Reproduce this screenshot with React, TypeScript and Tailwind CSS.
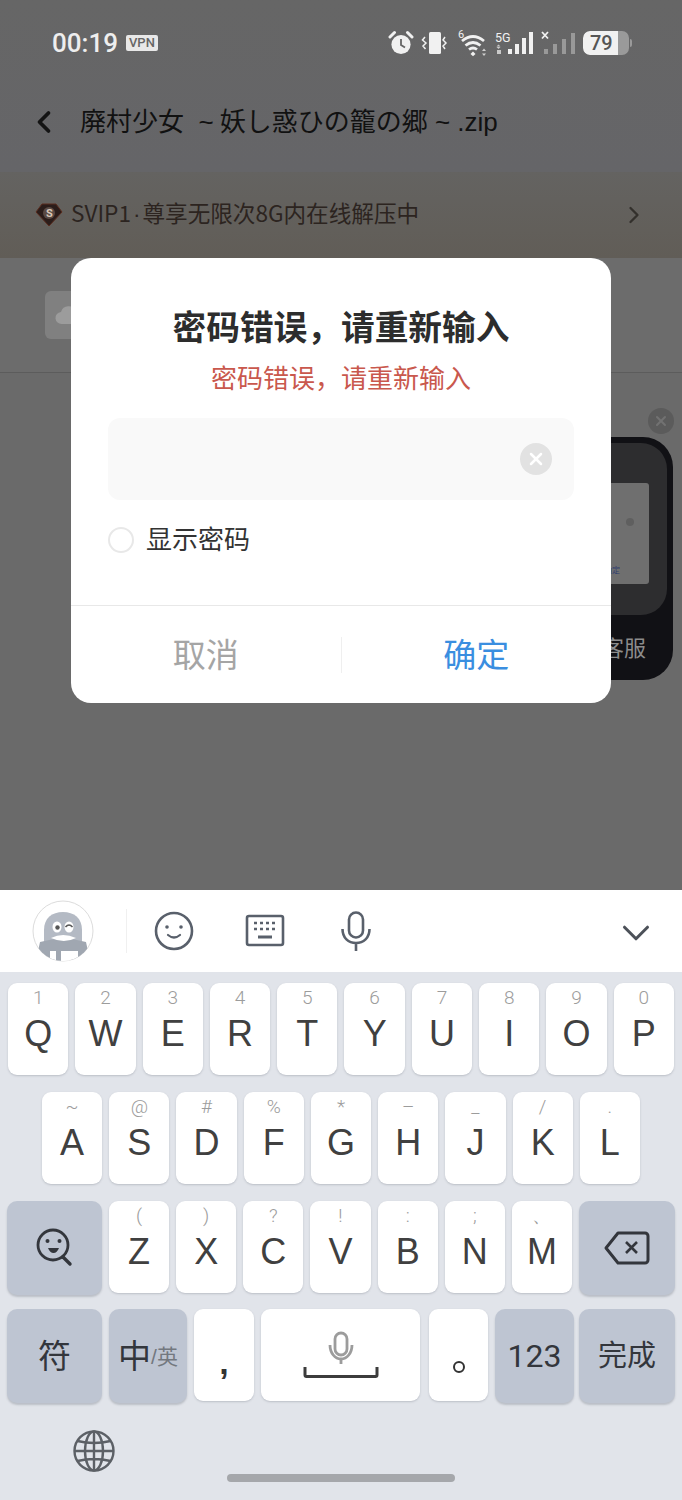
import { ChevronLeft, ChevronRight, ChevronDown, X } from "lucide-react";

const cjk = "font-['Liberation_Sans','Noto_Sans_CJK_SC',sans-serif]";

const row1 = [
  ["1", "Q"],
  ["2", "W"],
  ["3", "E"],
  ["4", "R"],
  ["5", "T"],
  ["6", "Y"],
  ["7", "U"],
  ["8", "I"],
  ["9", "O"],
  ["0", "P"],
];
const row2 = [
  ["~", "A"],
  ["@", "S"],
  ["#", "D"],
  ["%", "F"],
  ["*", "G"],
  ["–", "H"],
  ["_", "J"],
  ["/", "K"],
  [".", "L"],
];
const row3 = [
  ["(", "Z"],
  [")", "X"],
  ["?", "C"],
  ["!", "V"],
  [":", "B"],
  [";", "N"],
  ["、", "M"],
];

function LetterKey({ hint, label }: { hint: string; label: string }) {
  return (
    <div className="flex h-[92px] min-w-0 flex-1 flex-col items-center rounded-[9px] bg-white pt-[4px] shadow-[0_1px_2px_rgba(100,105,120,0.3)]">
      <span className="h-[22px] font-['Roboto',sans-serif] text-[19px] leading-[22px] font-light text-[#9c9c9c]">{hint}</span>
      <span className="mt-[3px] text-[36px] leading-[44px] text-[#404040]">{label}</span>
    </div>
  );
}

function FuncKey({ className, children }: { className: string; children: React.ReactNode }) {
  return (
    <div className={`flex h-[94px] items-center justify-center rounded-[10px] bg-[#bec5d2] shadow-[0_2px_2px_rgba(100,105,120,0.3)] ${className}`}>
      {children}
    </div>
  );
}

function PlainKey({ className, children }: { className: string; children: React.ReactNode }) {
  return (
    <div className={`flex h-[92px] items-center justify-center rounded-[9px] bg-white shadow-[0_1px_2px_rgba(100,105,120,0.3)] ${className}`}>
      {children}
    </div>
  );
}

function StatusIcons() {
  return (
    <div className="flex items-center">
      {/* alarm */}
      <svg width="26" height="26" viewBox="0 0 26 26" className="mr-[7px]">
        <circle cx="13" cy="14.5" r="9.6" fill="#f1f1f1" />
        <path d="M13 9v6l4 2.5" fill="none" stroke="#666" strokeWidth="1.8" />
        <path d="M2 7 6.5 2.5M24 7l-4.5-4.5" stroke="#f1f1f1" strokeWidth="3" strokeLinecap="round" />
      </svg>
      {/* vibrate */}
      <svg width="28" height="24" viewBox="0 0 28 24" className="mr-[9px]">
        <rect x="8" y="1" width="12" height="22" rx="1.5" fill="#f1f1f1" />
        <path d="M4 6 1.5 9 5 12l-3 3 2.5 3M24 6l-2 3 3 3-3 3 2 3" fill="none" stroke="#f1f1f1" strokeWidth="1.5" />
      </svg>
      {/* wifi */}
      <svg width="30" height="28" viewBox="0 0 30 28" className="mr-[7px]">
        <path d="M4 12q11-9 22 0M7.5 16.5q7.5-6 15 0M11 20.5q4-3 8 0" fill="none" stroke="#f1f1f1" strokeWidth="2.8" />
        <path d="M15 22.5l2.5 2.4-2.5 2.4-2.5-2.4z" fill="#f1f1f1" />
        <path d="M26 19.5l2 2.5h-4zM26 27l-2-2.5h4z" fill="#cfcfcf" />
        <text x="0" y="9" fontSize="11" fill="#f1f1f1" fontFamily="Roboto">6</text>
      </svg>
      {/* 5G signal */}
      <svg width="40" height="24" viewBox="0 0 40 24" className="mr-[6px]">
        <text x="0" y="11" fontSize="12.5" fill="#f1f1f1" fontFamily="Roboto">5G</text>
        <path d="M3.5 13.5l2 2h-4zM3.5 18l-2-2h4z" fill="#c9c9c9" />
        <rect x="2" y="19" width="4" height="4" fill="#c9c9c9" />
        <rect x="13" y="18" width="4" height="5" fill="#f1f1f1" />
        <rect x="20" y="13" width="4" height="10" fill="#f1f1f1" />
        <rect x="27" y="7" width="4" height="16" fill="#f1f1f1" />
        <rect x="34" y="1" width="4" height="22" fill="#f1f1f1" />
      </svg>
      {/* no sim signal */}
      <svg width="36" height="26" viewBox="0 0 36 26" className="mr-[6px]">
        <rect x="3" y="19" width="4" height="5" fill="#999" />
        <rect x="12" y="14" width="4" height="10" fill="#999" />
        <rect x="21" y="9" width="4" height="15" fill="#999" />
        <rect x="30" y="3" width="4" height="21" fill="#999" />
        <path d="M1 2l6 6.5M7 2 1 8.5" stroke="#f1f1f1" strokeWidth="1.8" />
      </svg>
      {/* battery */}
      <div className="relative h-[24px] w-[46px] overflow-hidden rounded-[7px] bg-[#9a9a9a]">
        <div className="h-full w-[35px] rounded-l-[7px] bg-[#f1f1f1]" />
        <span className="absolute top-0 left-[7px] font-['Roboto',sans-serif] text-[20px] leading-[24px] font-medium text-[#555]">79</span>
      </div>
      <div className="ml-[1px] h-[8px] w-[2px] rounded-r-full bg-[#9a9a9a]" />
    </div>
  );
}

function Penguin() {
  return (
    <svg width="62" height="62" viewBox="0 0 62 62">
      <defs>
        <clipPath id="round">
          <circle cx="31" cy="31" r="30" />
        </clipPath>
      </defs>
      <circle cx="31" cy="31" r="30" fill="#fff" stroke="#dcdcdc" />
      <g clipPath="url(#round)">
        <path d="M12 44V30C12 18 20 12 31 12s19 6 19 18v14z" fill="#b4bac4" />
        <path d="M8 42q23-7 46 0l3 14-3 4H8l-3-4z" fill="#a0a7b1" />
        <rect x="18" y="51" width="28" height="11" fill="#fff" />
        <rect x="24" y="48" width="5" height="14" fill="#a0a7b1" />
        <ellipse cx="25" cy="27" rx="4.5" ry="5.5" fill="#fff" />
        <ellipse cx="37" cy="27" rx="4.5" ry="5.5" fill="#fff" />
        <circle cx="25.5" cy="27.5" r="2.2" fill="#555" />
        <path d="M33.5 27q3.5-4 7 0" fill="none" stroke="#555" strokeWidth="1.5" />
        <path d="M19 38q12-6 25 0q-12 6-25 0z" fill="#fff" />
      </g>
    </svg>
  );
}

export default function App() {
  return (
    <div className={`flex h-[1500px] w-[682px] flex-col overflow-hidden bg-[#e1e4ea] ${cjk}`}>
      {/* Dimmed page */}
      <div className="relative h-[890px] shrink-0 bg-[#6a6a6a]">
        <div className="h-[172px] bg-gradient-to-b from-[#666666] to-[#656568]">
          <div className="flex h-[86px] items-center justify-between pr-[50px] pl-[52px]">
            <div className="flex items-center">
              <span className="font-['Roboto',sans-serif] text-[26px] font-medium text-[#eeeeee]">00:19</span>
              <span className="ml-[8px] rounded-[2px] bg-[#e8e8e8] px-[3px] font-['Roboto',sans-serif] text-[13px] leading-[16px] font-medium text-[#666]">
                VPN
              </span>
            </div>
            <StatusIcons />
          </div>
          <div className="mt-[18px] flex items-center pl-[26px]">
            <ChevronLeft size={36} strokeWidth={2.5} className="text-[#141414]" />
            <span className="ml-[18px] font-['Liberation_Sans','Noto_Sans_CJK_JP',sans-serif] text-[26px] leading-[36px] whitespace-pre text-[#111111]">
              廃村少女  ~<span className="ml-[6px]">妖し惑ひの籠の郷</span> ~ .zip
            </span>
          </div>
        </div>

        {/* SVIP banner */}
        <div className="flex h-[86px] items-center justify-between bg-gradient-to-b from-[#646361] to-[#615d57] pr-[34px] pl-[35px]">
          <div className="flex items-center">
            <svg width="28" height="26" viewBox="0 0 28 26">
              <path d="M7 2h14l6 8-13 14L1 10z" fill="#2b1d1a" stroke="#5a2c1e" strokeWidth="1" />
              <circle cx="14" cy="11" r="6" fill="#5a4a44" />
              <text x="11" y="15" fontSize="11" fontWeight="700" fill="#d8c8b8" fontFamily="Roboto">S</text>
            </svg>
            <span className="mt-[-3px] ml-[8px] font-['Noto_Sans_CJK_SC',sans-serif] text-[22.6px] leading-[30px] text-[#2c2420]">
              SVIP1<span className="mx-[2px] font-['Liberation_Sans',sans-serif]">·</span>尊享无限次8G内在线解压中
            </span>
          </div>
          <ChevronRight size={28} strokeWidth={2} className="text-[#33302c]" />
        </div>

        {/* File row */}
        <div className="flex h-[115px] items-center border-b border-[#5c5c5c] bg-[#6c6c6c] pl-[45px]">
          <div className="flex h-[48px] w-[48px] items-center justify-center rounded-[6px] bg-[#808080]">
            <svg width="30" height="22" viewBox="0 0 30 22">
              <path d="M8 20a6 6 0 0 1-1-12 8 8 0 0 1 15-1 6.5 6.5 0 0 1 0 13z" fill="#9c9c9c" />
            </svg>
          </div>
        </div>

        {/* Floating service widget */}
        <div className="absolute top-[408px] right-[8px] flex h-[26px] w-[26px] items-center justify-center rounded-full bg-[#5b5b5b]">
          <X size={16} strokeWidth={3} className="text-[#727272]" />
        </div>
        <div className="absolute top-[437px] right-[9px] flex h-[243px] w-[120px] flex-col rounded-[30px] bg-[#111115] p-[6px]">
          <div className="relative flex h-[172px] items-start justify-end rounded-[26px] bg-[#2d2d2f] pt-[40px] pr-[18px]">
            <div className="relative h-[101px] w-[90px] rounded-[3px] bg-[#6f6f6f]">
              <span className="absolute top-[35px] right-[15px] h-[8px] w-[8px] rounded-full bg-[#5f5f5f]" />
              <span className="absolute right-[29px] bottom-[7px] text-[8px] text-[#2f3d6e]">确定</span>
            </div>
          </div>
          <span className="mt-[20px] pr-[21px] text-right text-[22px] leading-[28px] text-[#8c8c8c]">客服</span>
        </div>

        {/* Password dialog */}
        <div className="absolute top-[258px] left-[71px] flex h-[445px] w-[540px] flex-col rounded-[20px] bg-white">
          <h1 className="mt-[50px] text-center text-[33.7px] leading-[40px] font-bold text-[#2d2d2d]">密码错误，请重新输入</h1>
          <p className="mt-[13px] text-center text-[26px] leading-[36px] text-[#c9584d]">密码错误，请重新输入</p>
          <div className="mx-[37px] mt-[21px] flex h-[82px] items-center justify-end rounded-[12px] bg-[#f9f9f9] pr-[22px]">
            <div className="flex h-[32px] w-[32px] items-center justify-center rounded-full bg-[#e2e2e2]">
              <X size={20} strokeWidth={3} className="text-white" />
            </div>
          </div>
          <div className="mt-[23px] ml-[37px] flex items-center">
            <span className="h-[26px] w-[26px] rounded-full border-2 border-[#e8e8e8]" />
            <span className="ml-[12px] text-[26px] leading-[34px] text-[#333333]">显示密码</span>
          </div>
          <div className="mt-[48px] flex h-[99px] items-center border-t border-[#e8e8e8] pt-[2px]">
            <div className="flex flex-1 justify-center text-[33px] text-[#a5a5a5]">取消</div>
            <div className="h-[36px] w-px bg-[#efefef]" />
            <div className="flex flex-1 justify-center text-[33px] text-[#3a8ee0]">确定</div>
          </div>
        </div>
      </div>

      {/* Keyboard toolbar */}
      <div className="flex h-[82px] shrink-0 items-center bg-white pr-[32px] pl-[32px]">
        <Penguin />
        <div className="ml-[32px] h-[44px] w-px bg-[#f0f0f0]" />
        <svg width="40" height="40" viewBox="0 0 40 40" className="ml-[27px]">
          <circle cx="20" cy="20" r="18" fill="none" stroke="#59606b" strokeWidth="2.6" />
          <circle cx="13" cy="16" r="1.8" fill="#59606b" />
          <circle cx="27" cy="16" r="1.8" fill="#59606b" />
          <path d="M14 24q6 5 12 0" fill="none" stroke="#59606b" strokeWidth="2.2" strokeLinecap="round" />
        </svg>
        <svg width="40" height="34" viewBox="0 0 40 34" className="ml-[51px]">
          <rect x="2" y="2" width="36" height="29" rx="2" fill="none" stroke="#59606b" strokeWidth="2.6" />
          <path d="M9 9h3M15 9h3M21 9h3M27 9h3M9 15h3M15 15h3M21 15h3M27 15h3" stroke="#59606b" strokeWidth="2.6" />
          <path d="M13 23h14" stroke="#59606b" strokeWidth="3" />
        </svg>
        <svg width="30" height="40" viewBox="0 0 30 40" className="ml-[56px]">
          <rect x="8" y="1.5" width="14" height="25" rx="7" fill="none" stroke="#59606b" strokeWidth="2.6" />
          <path d="M1.5 18c0 9 6 14 13.5 14s13.5-5 13.5-14M15 32v8" fill="none" stroke="#59606b" strokeWidth="2.6" />
        </svg>
        <ChevronDown size={46} strokeWidth={1.6} className="mt-[4px] mr-[-9px] ml-auto text-[#4c5159]" />
      </div>

      {/* Keyboard */}
      <div className="flex flex-col pt-[11px]">
        <div className="flex gap-[7px] px-[8px]">
          {row1.map(([hint, label]) => (
            <LetterKey key={label} hint={hint} label={label} />
          ))}
        </div>
        <div className="mt-[17px] flex gap-[7px] px-[42px]">
          {row2.map(([hint, label]) => (
            <LetterKey key={label} hint={hint} label={label} />
          ))}
        </div>
        <div className="mt-[17px] flex gap-[7px] px-[7px]">
          <FuncKey className="w-[95px]">
            <svg width="40" height="46" viewBox="0 0 40 46">
              <circle cx="18" cy="20" r="15" fill="none" stroke="#33363c" strokeWidth="2.8" />
              <circle cx="12.5" cy="16" r="2" fill="#33363c" />
              <circle cx="24.5" cy="16" r="2" fill="#33363c" />
              <path d="M13 23h11q-2 5-5.5 5T13 23z" fill="#33363c" />
              <path d="M28 32l7 7" stroke="#33363c" strokeWidth="3.4" strokeLinecap="round" />
            </svg>
          </FuncKey>
          {row3.map(([hint, label]) => (
            <LetterKey key={label} hint={hint} label={label} />
          ))}
          <FuncKey className="w-[96px]">
            <svg width="46" height="34" viewBox="0 0 46 34">
              <path d="M14 2h27a3 3 0 0 1 3 3v24a3 3 0 0 1-3 3H14L2 17z" fill="none" stroke="#33363c" strokeWidth="3" strokeLinejoin="round" />
              <path d="M22 11l11 11M33 11 22 22" stroke="#33363c" strokeWidth="2.6" />
            </svg>
          </FuncKey>
        </div>
        <div className="mt-[14px] flex gap-[7px] px-[7px]">
          <FuncKey className="w-[95px]">
            <span className="text-[33px] leading-none text-[#33363c]">符</span>
          </FuncKey>
          <FuncKey className="w-[78px]">
            <span className="text-[33px] leading-none text-[#33363c]">中</span>
            <span className="text-[21px] leading-none text-[#73787f]">/英</span>
          </FuncKey>
          <PlainKey className="w-[60px]">
            <span className="mt-[14px] text-[34px] font-bold leading-none text-[#333]">,</span>
          </PlainKey>
          <PlainKey className="w-[159px] flex-col">
            <svg width="76" height="48" viewBox="0 0 76 48">
              <rect x="32" y="2" width="12" height="22" rx="6" fill="none" stroke="#9c9c9c" strokeWidth="2.8" />
              <path d="M27 14c0 8 5 14 11 14s11-6 11-14M38 28v5" fill="none" stroke="#9c9c9c" strokeWidth="2.8" />
              <path d="M2 36v8a1.5 1.5 0 0 0 1.5 1.5h69a1.5 1.5 0 0 0 1.5-1.5v-8" fill="none" stroke="#3c3c3c" strokeWidth="3" />
            </svg>
          </PlainKey>
          <PlainKey className="ml-[2px] w-[59px]">
            <span className="mt-[24px] h-[12px] w-[12px] rounded-full border-[2.5px] border-[#333]" />
          </PlainKey>
          <FuncKey className="w-[79px]">
            <span className="font-['Roboto',sans-serif] text-[32px] leading-none text-[#33363c]">123</span>
          </FuncKey>
          <FuncKey className="ml-[-2px] w-[96px]">
            <span className="text-[29px] leading-none text-[#33363c]">完成</span>
          </FuncKey>
        </div>

        <div className="mt-[27px] pl-[73px]">
          <svg width="42" height="42" viewBox="0 0 42 42" fill="none" stroke="#5c6066" strokeWidth="2.4">
            <circle cx="21" cy="21" r="19.5" />
            <ellipse cx="21" cy="21" rx="9" ry="19.5" />
            <path d="M21 1.5v39M1.5 21h39M4.5 11q16.5 4 33 0M4.5 31q16.5-4 33 0" />
          </svg>
        </div>
        <div className="mx-auto mt-[2px] h-[8px] w-[228px] rounded-full bg-[#a5a7ab]" />
      </div>
    </div>
  );
}
